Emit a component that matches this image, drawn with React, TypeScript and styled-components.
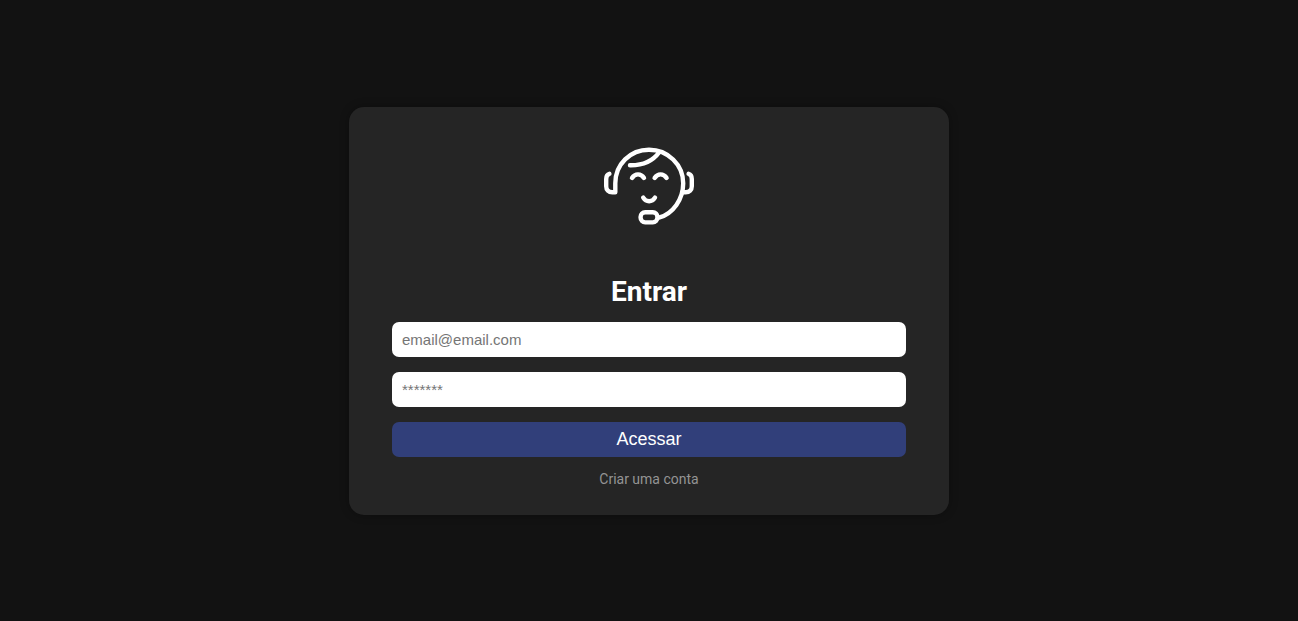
import React from "react";
import styled, { createGlobalStyle } from "styled-components";

const GlobalStyle = createGlobalStyle`
  * {
    box-sizing: border-box;
    margin: 0;
    padding: 0;
  }

  body {
    background: #121212;
    color: #fff;
    font-family: Roboto, sans-serif;
  }
`;

const Page = styled.main`
  min-height: 100vh;
  display: flex;
  align-items: center;
  justify-content: center;
`;

const Card = styled.section`
  width: 100%;
  max-width: 600px;
  padding: 40px 43px 28px;
  display: flex;
  flex-direction: column;
  align-items: center;
  background: #252525;
  border-radius: 15px;
  box-shadow: 0 0 10px rgba(0, 0, 0, 0.3);
`;

const Logo = styled.svg`
  width: 90px;
  height: 78px;
  fill: none;
  stroke: #fff;
  stroke-width: 4.4;
  stroke-linecap: round;
  stroke-linejoin: round;
`;

const Title = styled.h1`
  margin: 51px 0 14px;
  font-size: 28px;
  line-height: 32px;
  font-weight: 700;
`;

const Form = styled.form`
  width: 100%;
  display: flex;
  flex-direction: column;
  gap: 15px;
`;

const Field = styled.input`
  width: 100%;
  height: 35px;
  padding: 0 10px;
  border: 0;
  border-radius: 7px;
  background: #fff;
  color: #121212;
  font-family: "Liberation Sans", Arial, sans-serif;
  font-size: 15px;

  &::placeholder {
    color: #757575;
  }
`;

const SubmitButton = styled.button`
  width: 100%;
  height: 35px;
  border: 0;
  border-radius: 7px;
  background: #313f7a;
  color: #fff;
  font-family: "Liberation Sans", Arial, sans-serif;
  font-size: 18px;
  cursor: pointer;
`;

const SignUpLink = styled.a`
  margin-top: 14px;
  color: #949494;
  font-size: 14px;
  line-height: 16px;
  text-decoration: none;
`;

export default function App() {
  return (
    <>
      <GlobalStyle />
      <Page>
        <Card>
          <Logo viewBox="0 0 90 78" aria-hidden="true">
            <path d="M5.4 26.8C3.2 27.4 2.2 29.2 2.2 32V39.2C2.2 42.9 4.6 45.2 8.3 45.2H11.3V36.3C11.3 17.3 26.2 2.7 45 2.7S79.2 17.6 79.2 36.3C79.2 52.5 69 66.4 55.6 70.4" />
            <path d="M84.6 26.8C86.8 27.4 87.8 29.2 87.8 32V39.2C87.8 42.9 85.4 45.2 81.7 45.2H78.4" />
            <path d="M26 18.2C38.5 18.4 48.5 14.4 55.2 5.2" />
            <path d="M28 31C31 26.2 37 26.2 40 31" />
            <path d="M50.6 31C53.6 26.2 59.6 26.2 62.6 31" />
            <path d="M39.2 50.6C42.2 55.4 48 55.4 51 50.6" />
            <rect x="36.6" y="65.2" width="16.8" height="10.2" rx="4.6" />
          </Logo>
          <Title>Entrar</Title>
          <Form onSubmit={(event) => event.preventDefault()}>
            <Field type="email" placeholder="email@email.com" aria-label="Email" />
            <Field type="password" placeholder="*******" aria-label="Senha" />
            <SubmitButton type="submit">Acessar</SubmitButton>
          </Form>
          <SignUpLink href="#criar-conta">Criar uma conta</SignUpLink>
        </Card>
      </Page>
    </>
  );
}
